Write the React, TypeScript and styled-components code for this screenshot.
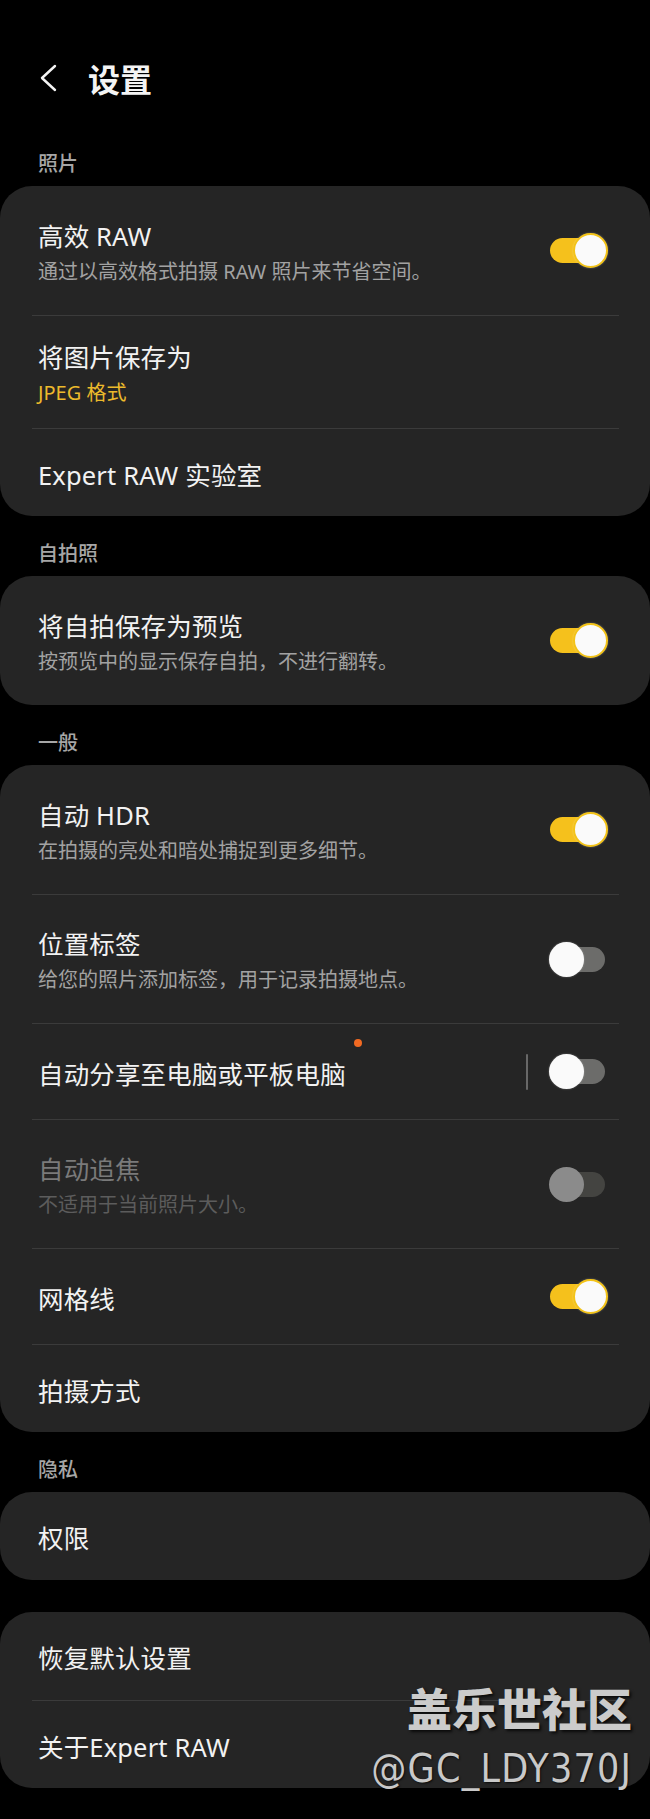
import React from 'react';
import styled, { createGlobalStyle } from 'styled-components';

const Global = createGlobalStyle`
  html, body { margin: 0; padding: 0; background: #000; }
  body {
    font-family: "Noto Sans", "Noto Sans CJK SC", sans-serif;
    -webkit-font-smoothing: antialiased;
  }
`;

const Page = styled.div`
  position: relative;
  width: 650px;
  min-height: 1819px;
  box-sizing: border-box;
  padding: 56px 0 31px;
  background: #000;
`;

const TopBar = styled.header`
  display: flex;
  align-items: center;
  gap: 31px;
  height: 44px;
  margin-bottom: 26px;
  padding-left: 39px;
`;

const BackIcon = styled.svg`
  display: block;
  flex: none;
`;

const PageTitle = styled.h1`
  margin: 0;
  font-family: "Noto Sans CJK SC", sans-serif;
  font-size: 32px;
  line-height: 44px;
  font-weight: 700;
  color: #f4f4f4;
`;

const Section = styled.section<{ $bare?: boolean }>`
  padding-top: ${(p) => (p.$bare ? '32px' : '0')};
`;

const SectionLabel = styled.div`
  padding: 26px 0 10px 38px;
  font-size: 20px;
  line-height: 24px;
  font-weight: 500;
  color: #a6a6a6;
`;

const Card = styled.div`
  display: flex;
  flex-direction: column;
  background: #252525;
  border-radius: 32px;
  overflow: hidden;
`;

const Row = styled.div<{ $h: number }>`
  display: flex;
  align-items: center;
  box-sizing: border-box;
  height: ${(p) => p.$h}px;
  margin: 0 31px 0 32px;
  padding: 0 11px 0 6px;

  & + & {
    border-top: 1px solid #3b3b3b;
  }
`;

const TextCol = styled.div`
  flex: 1;
  min-width: 0;
  display: flex;
  flex-direction: column;
  align-items: flex-start;
  padding-top: 4px;
`;

const RowTitle = styled.span<{ $disabled?: boolean }>`
  position: relative;
  display: inline-block;
  font-size: 25.5px;
  line-height: 32px;
  letter-spacing: 0.15px;
  color: ${(p) => (p.$disabled ? '#7a7a7a' : '#f2f2f2')};
  white-space: nowrap;
`;

const NewDot = styled.span`
  position: absolute;
  right: -16px;
  top: -19px;
  width: 8px;
  height: 8px;
  border-radius: 50%;
  background: #f26a22;
`;

type Tone = 'muted' | 'accent' | 'disabled';

const subColor: Record<Tone, string> = {
  muted: '#a2a2a2',
  accent: '#ecba2c',
  disabled: '#5c5c5c',
};

const RowSub = styled.span<{ $tone: Tone }>`
  margin-top: 6px;
  font-size: 20px;
  line-height: 28px;
  color: ${(p) => subColor[p.$tone]};
  white-space: nowrap;
`;

const VDivider = styled.span`
  flex: none;
  width: 2px;
  height: 36px;
  margin-right: 22px;
  background: #686868;
  border-radius: 1px;
`;

const Switch = styled.span`
  position: relative;
  flex: none;
  display: block;
  width: 58px;
  height: 35px;
`;

type SwitchState = 'on' | 'off' | 'disabled';

const trackColor: Record<SwitchState, string> = {
  on: '#f5c11c',
  off: '#6c6c6a',
  disabled: '#444441',
};

const Track = styled.span<{ $state: SwitchState }>`
  position: absolute;
  left: 0;
  top: 5px;
  width: 55px;
  height: 25px;
  border-radius: 13px;
  background: ${(p) => trackColor[p.$state]};
`;

const Knob = styled.span<{ $state: SwitchState }>`
  position: absolute;
  top: 0;
  left: ${(p) => (p.$state === 'on' ? '23px' : '-1px')};
  width: 35px;
  height: 35px;
  box-sizing: border-box;
  border-radius: 50%;
  background: ${(p) => (p.$state === 'disabled' ? '#8b8b8b' : '#fafafa')};
  border: ${(p) => (p.$state === 'on' ? '2px solid #f3c318' : 'none')};
  box-shadow: ${(p) =>
    p.$state === 'disabled' ? 'none' : '0 0 2px rgba(255,255,255,0.35)'};
`;

const Watermark = styled.div`
  position: absolute;
  top: 1680px;
  right: 18px;
  display: flex;
  flex-direction: column;
  align-items: flex-end;
  pointer-events: none;
`;

const WatermarkBrand = styled.span`
  font-family: "Noto Sans CJK SC", sans-serif;
  font-size: 45px;
  line-height: 56px;
  font-weight: 900;
  color: #cbcbcb;
  text-shadow: 2px 2px 3px rgba(0, 0, 0, 0.75);
`;

const WatermarkHandle = styled.span`
  margin-top: 11px;
  font-family: "DejaVu Sans Condensed", "DejaVu Sans", sans-serif;
  font-stretch: condensed;
  font-size: 39px;
  line-height: 44px;
  letter-spacing: 1.2px;
  color: #c9c9c9;
  text-shadow: 1px 1px 2px rgba(0, 0, 0, 0.7);
`;

type RowData = {
  title: string;
  sub?: string;
  subTone?: Tone;
  toggle?: SwitchState;
  dot?: boolean;
  split?: boolean;
};

type SectionData = { label?: string; rows: RowData[] };

const sections: SectionData[] = [
  {
    label: '照片',
    rows: [
      { title: '高效 RAW', sub: '通过以高效格式拍摄 RAW 照片来节省空间。', toggle: 'on' },
      { title: '将图片保存为', sub: 'JPEG 格式', subTone: 'accent' },
      { title: 'Expert RAW 实验室' },
    ],
  },
  {
    label: '自拍照',
    rows: [
      { title: '将自拍保存为预览', sub: '按预览中的显示保存自拍，不进行翻转。', toggle: 'on' },
    ],
  },
  {
    label: '一般',
    rows: [
      { title: '自动 HDR', sub: '在拍摄的亮处和暗处捕捉到更多细节。', toggle: 'on' },
      { title: '位置标签', sub: '给您的照片添加标签，用于记录拍摄地点。', toggle: 'off' },
      { title: '自动分享至电脑或平板电脑', toggle: 'off', dot: true, split: true },
      { title: '自动追焦', sub: '不适用于当前照片大小。', toggle: 'disabled' },
      { title: '网格线', toggle: 'on' },
      { title: '拍摄方式' },
    ],
  },
  {
    label: '隐私',
    rows: [{ title: '权限' }],
  },
  {
    rows: [{ title: '恢复默认设置' }, { title: '关于Expert RAW' }],
  },
];

function rowHeight(r: RowData): number {
  if (r.sub) return r.toggle ? 129 : 113;
  return r.toggle ? 96 : 88;
}

function SettingRow({ row }: { row: RowData }) {
  const disabled = row.toggle === 'disabled';
  const tone: Tone = disabled ? 'disabled' : row.subTone ?? 'muted';
  return (
    <Row $h={rowHeight(row)}>
      <TextCol>
        <RowTitle $disabled={disabled}>
          {row.title}
          {row.dot && <NewDot />}
        </RowTitle>
        {row.sub && <RowSub $tone={tone}>{row.sub}</RowSub>}
      </TextCol>
      {row.split && <VDivider />}
      {row.toggle && (
        <Switch>
          <Track $state={row.toggle} />
          <Knob $state={row.toggle} />
        </Switch>
      )}
    </Row>
  );
}

export default function App() {
  return (
    <>
      <Global />
      <Page>
        <TopBar>
          <BackIcon width="18" height="28" viewBox="0 0 18 28">
            <polyline
              points="16,2 3,14 16,26"
              fill="none"
              stroke="#f4f4f4"
              strokeWidth="2.4"
              strokeLinecap="round"
              strokeLinejoin="round"
            />
          </BackIcon>
          <PageTitle>设置</PageTitle>
        </TopBar>
        {sections.map((s, i) => (
          <Section key={i} $bare={!s.label}>
            {s.label && <SectionLabel>{s.label}</SectionLabel>}
            <Card>
              {s.rows.map((r, j) => (
                <SettingRow key={j} row={r} />
              ))}
            </Card>
          </Section>
        ))}
        <Watermark>
          <WatermarkBrand>盖乐世社区</WatermarkBrand>
          <WatermarkHandle>@GC_LDY370J</WatermarkHandle>
        </Watermark>
      </Page>
    </>
  );
}
